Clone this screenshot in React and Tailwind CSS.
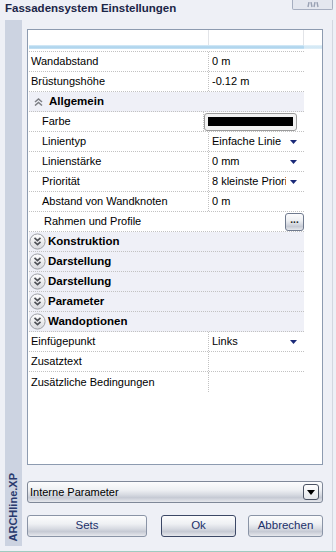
import React from 'react';

const rows = [
    { type: 'prop', name: 'Wandabstand', value: '0 m' },
    { type: 'prop', name: 'Brüstungshöhe', value: '-0.12 m' },
    { type: 'open', name: 'Allgemein' },
    { type: 'prop', name: 'Farbe', indent: true, swatch: true },
    { type: 'prop', name: 'Linientyp', indent: true, value: 'Einfache Linie', dropdown: true },
    { type: 'prop', name: 'Linienstärke', indent: true, value: '0 mm', dropdown: true },
    { type: 'prop', name: 'Priorität', indent: true, value: '8 kleinste Priorität', dropdown: true },
    { type: 'prop', name: 'Abstand von Wandknoten', indent: true, value: '0 m' },
    { type: 'button', name: 'Rahmen und Profile' },
    { type: 'closed', name: 'Konstruktion' },
    { type: 'closed', name: 'Darstellung' },
    { type: 'closed', name: 'Darstellung' },
    { type: 'closed', name: 'Parameter' },
    { type: 'closed', name: 'Wandoptionen' },
    { type: 'prop', name: 'Einfügepunkt', value: 'Links', dropdown: true },
    { type: 'prop', name: 'Zusatztext', value: '' },
    { type: 'prop', name: 'Zusätzliche Bedingungen', value: '', last: true },
];

const btnBg = 'bg-[linear-gradient(to_bottom,#fcfcfd_0%,#eef0f3_40%,#d9dce3_62%,#c6cad4_78%,#e6e8ed_100%)]';

// small navy arrow used by the dropdown cells
const ArrowDown = ({ color = '#1b2a78', w = 7, h = 4 }) => (
    <svg width={w} height={h} viewBox={`0 0 ${w} ${h}`}>
        <polygon points={`0,0 ${w},0 ${w / 2},${h}`} fill={color} />
    </svg>
);

const ExpandIcon = () => (
    <svg width="17" height="17" viewBox="0 0 17 17">
        <defs>
            <linearGradient id="cg" x1="0" y1="0" x2="0" y2="1">
                <stop offset="0" stopColor="#ffffff" />
                <stop offset="1" stopColor="#d8d9dd" />
            </linearGradient>
        </defs>
        <circle cx="8.5" cy="8.5" r="7.6" fill="url(#cg)" stroke="#9c9ea4" strokeWidth="1" />
        <polyline points="5.5,4.8 8.5,7.6 11.5,4.8" fill="none" stroke="#4e5056" strokeWidth="1.6" />
        <polyline points="5.5,8.8 8.5,11.6 11.5,8.8" fill="none" stroke="#4e5056" strokeWidth="1.6" />
    </svg>
);

const CollapseIcon = () => (
    <svg width="9" height="8" viewBox="0 0 9 8">
        <polyline points="1,4 4.5,1 8,4" fill="none" stroke="#7c7e84" strokeWidth="1.5" />
        <polyline points="1,7.5 4.5,4.5 8,7.5" fill="none" stroke="#7c7e84" strokeWidth="1.5" />
    </svg>
);

const Row = ({ row }) => {
    const line = row.last ? '' : 'border-b border-dotted border-[#c2c2c2]';

    if (row.type === 'open') {
        return (
            <div className={`flex h-[20px] items-center bg-[#eff0f7] pl-[5px] ${line}`}>
                <CollapseIcon />
                <span className="ml-[6px] text-[11.5px] font-bold text-black">{row.name}</span>
            </div>
        );
    }

    if (row.type === 'closed') {
        return (
            <div className={`flex h-[20px] items-center bg-[#eff0f7] ${line}`}>
                <ExpandIcon />
                <span className="ml-[2px] text-[11.5px] font-bold text-black">{row.name}</span>
            </div>
        );
    }

    if (row.type === 'button') {
        return (
            <div className={`flex h-[20px] items-center pl-[15px] text-[11px] text-black ${line}`}>
                <span>{row.name}</span>
                <div className={`ml-auto flex h-[18px] w-[19px] items-center justify-center rounded-[3px] border border-[#6f7a8e] ${btnBg} text-[10px] font-bold leading-none text-[#222] pb-[3px]`}>
                    ...
                </div>
            </div>
        );
    }

    return (
        <div className={`flex h-[20px] text-[11px] text-black ${line}`}>
            <div className={`flex h-full w-[180px] items-center border-r border-dotted border-[#c2c2c2] ${row.indent ? 'pl-[13px]' : 'pl-[2px]'}`}>
                {row.name}
            </div>
            <div className="flex h-full flex-1 items-center pl-[3px] pr-[7px]">
                {row.swatch ? (
                    <div className="-ml-[3px] flex h-[18px] w-[93px] items-center rounded-[3px] border border-[#9c9c9c] bg-[#f3f3f3] px-[3px]">
                        <div className="h-[9px] flex-1 bg-black" />
                    </div>
                ) : (
                    <>
                        <span className="w-[74px] overflow-hidden whitespace-nowrap">{row.value}</span>
                        {row.dropdown && (
                            <span className="ml-auto flex">
                                <ArrowDown />
                            </span>
                        )}
                    </>
                )}
            </div>
        </div>
    );
};

const App = () => {
    return (
        <div className="flex h-[552px] w-[336px] flex-col overflow-hidden border-b border-[#9fcbc0] bg-[#eef0f6] font-['Liberation_Sans',Arial,sans-serif]">
            {/* title bar */}
            <div className="flex h-[20px] shrink-0 items-start justify-between">
                <span className="pl-[5px] pt-[1px] text-[11.5px] font-bold leading-[14px] text-[#1b2547]">
                    Fassadensystem Einstellungen
                </span>
                <div className="mr-[3px] flex h-[10px] w-[41px] items-end justify-center rounded-b-[2px] border border-t-0 border-[#a6aec0] bg-[#e4e7ef]">
                    {/* lower half of the close cross, the rest is off screen */}
                    <svg width="12" height="6" viewBox="0 0 12 6" className="mb-[1px]">
                        <polyline points="2,0 1,5" fill="none" stroke="#9aa2b4" strokeWidth="1.4" />
                        <polyline points="4,0 5,5" fill="none" stroke="#9aa2b4" strokeWidth="1.4" />
                        <polyline points="8,0 7,5" fill="none" stroke="#9aa2b4" strokeWidth="1.4" />
                        <polyline points="10,0 11,5" fill="none" stroke="#9aa2b4" strokeWidth="1.4" />
                    </svg>
                </div>
            </div>

            <div className="flex flex-1">
                {/* side strip */}
                <div className="ml-[5px] flex h-[526px] w-[17px] flex-col items-center justify-end bg-[#ccd3e1] pb-[5px]">
                    <span className="rotate-180 text-[11px] font-bold leading-none text-[#29396d] [writing-mode:vertical-rl]">
                        ARCHline.XP
                    </span>
                </div>

                <div className="ml-[5px] flex w-[296px] flex-col pt-[9px]">
                    {/* property grid */}
                    <div className="h-[436px] border border-[#8d9bb0] bg-white pl-[1px]">
                        <div className="flex h-[15px]">
                            <div className="w-[180px] border-r border-[#e2e4e8]" />
                            <div className="w-[95px] border-r border-[#e2e4e8]" />
                        </div>
                        <div className="flex h-[4px]">
                            <div className="w-[275px] bg-[linear-gradient(to_bottom,#dcedf8,#a9d2ec,#c9e3f3)]" />
                            <div className="flex-1 bg-[linear-gradient(to_bottom,#e8f3fa,#cfe6f4,#e2f0f8)]" />
                        </div>
                        <div className="h-[2px]" />
                        <div className="w-[275px] border-t border-dotted border-[#c2c2c2]">
                            {rows.map((row, i) => (
                                <Row key={i} row={row} />
                            ))}
                        </div>
                    </div>

                    {/* parameter dropdown */}
                    <div className={`mt-[16px] flex h-[22px] items-center rounded-[3px] border border-[#7f8898] pl-[2px] pr-[3px] ${btnBg}`}>
                        <span className="text-[11px] text-black">Interne Parameter</span>
                        <div className="ml-auto flex h-[16px] w-[16px] items-center justify-center rounded-[3px] border border-[#4a5262] bg-[linear-gradient(to_bottom,#ffffff,#e4e6ea)]">
                            <ArrowDown color="#000" w={8} h={5} />
                        </div>
                    </div>

                    {/* buttons */}
                    <div className="mt-[12px] flex h-[22px]">
                        <button className={`w-[120px] rounded-[3px] border border-[#8a94a6] text-[11.5px] text-[#21306a] ${btnBg}`}>
                            Sets
                        </button>
                        <button className={`ml-[14px] w-[75px] rounded-[3px] border border-[#3c4866] text-[11.5px] text-[#21306a] ${btnBg}`}>
                            Ok
                        </button>
                        <button className={`ml-[12px] w-[75px] rounded-[3px] border border-[#8a94a6] text-[11.5px] text-[#21306a] ${btnBg}`}>
                            Abbrechen
                        </button>
                    </div>
                </div>

                <div className="ml-[9px] w-[1px] bg-[#d3d7e0]" />
            </div>
        </div>
    );
};

export default App;
